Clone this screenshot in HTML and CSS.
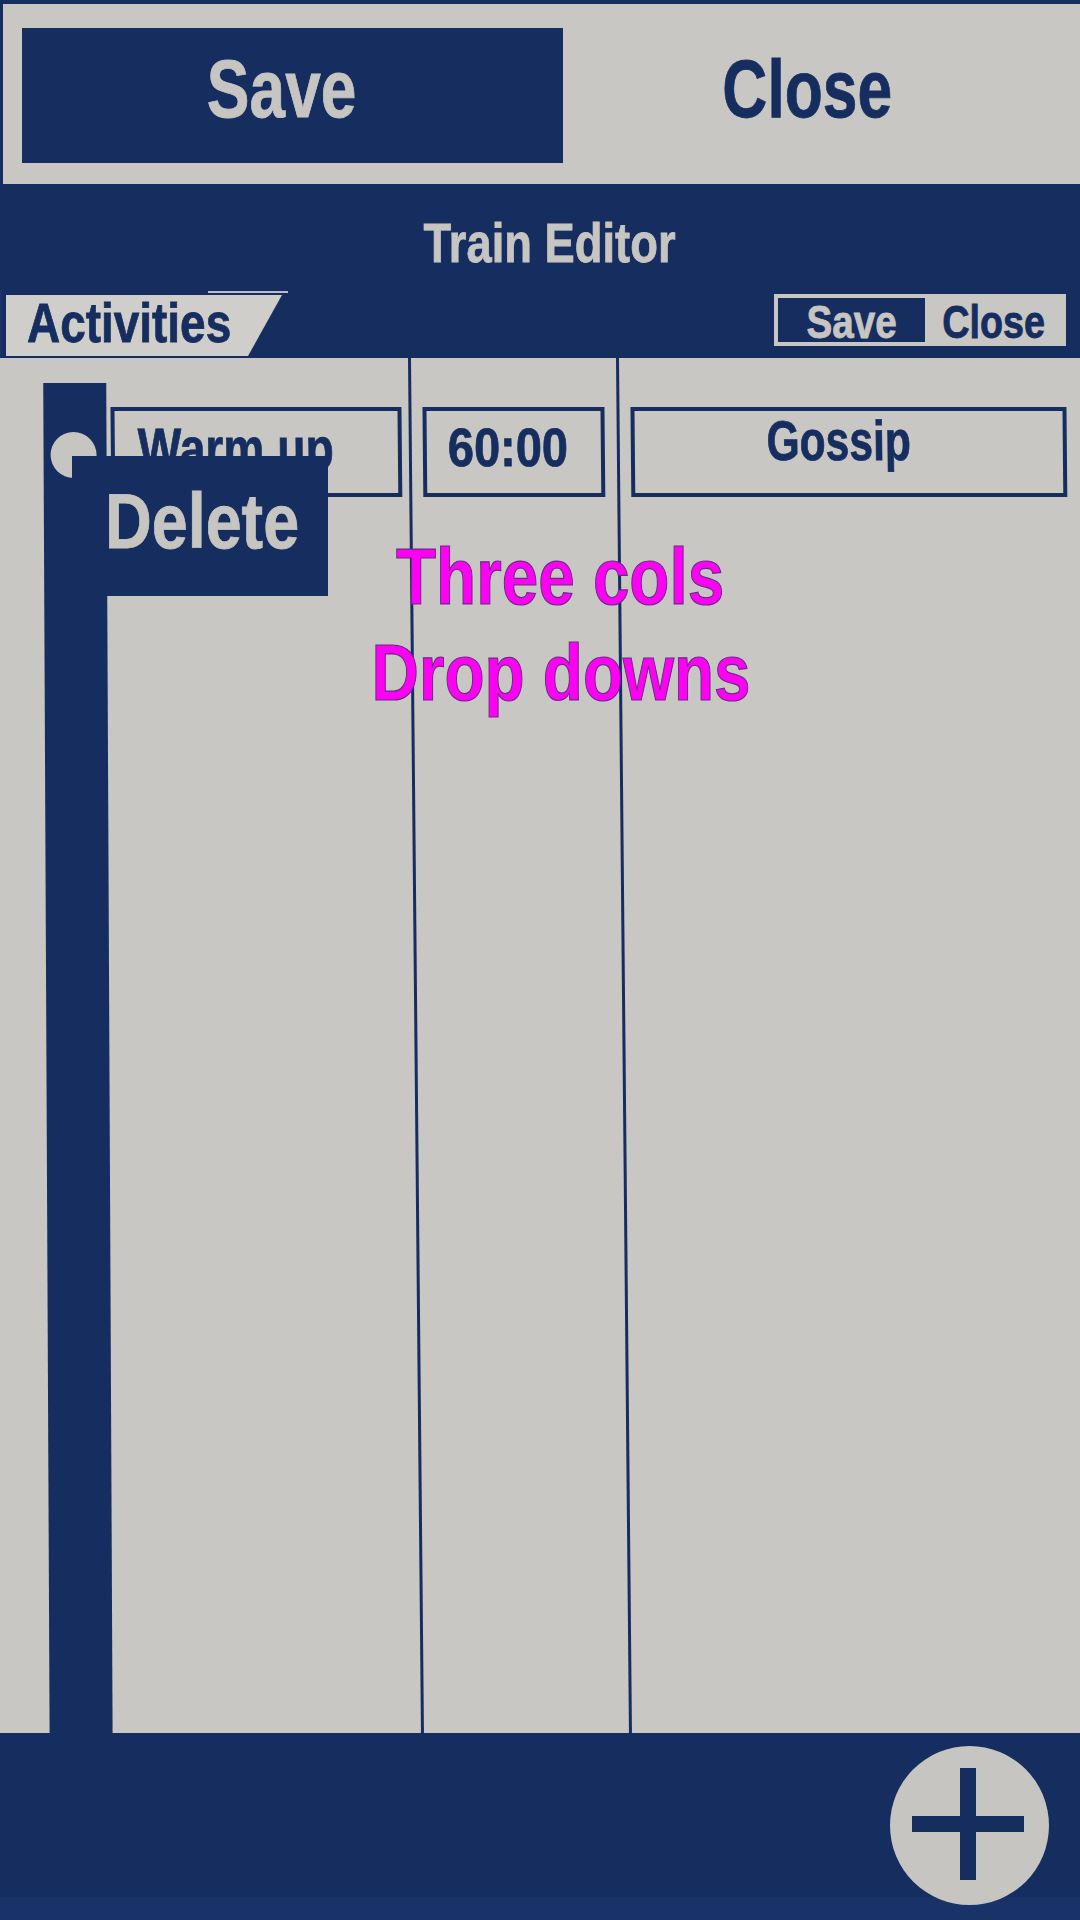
FILE: index.html
```html
<!DOCTYPE html>
<html lang="en">
<head>
<meta charset="utf-8">
<title>Train Editor</title>
<link rel="stylesheet" href="styles.css">
</head>
<body>
<div class="screen">
  <div class="topbar">
    <div class="btn-save"><span class="t">Save</span></div>
    <div class="btn-close"><span class="t">Close</span></div>
  </div>
  <div class="header">
    <div class="title"><span class="t">Train Editor</span></div>
    <div class="tabrow">
      <div class="tab-wrap"><div class="tab"><span class="t">Activities</span></div></div>
      <div class="mini"><span class="mini-save"><span class="t">Save</span></span><span class="mini-close"><span class="t">Close</span></span></div>
    </div>
  </div>
  <div class="content">
    <div class="cols">
      <div class="col col1">
        <div class="handle"><span class="knob"></span></div>
        <div class="field field-name"><span class="t">Warm up</span></div>
      </div>
      <div class="col col2"><div class="field field-time"><span class="t">60:00</span></div></div>
      <div class="col col3"><div class="field field-type"><span class="t">Gossip</span></div></div>
    </div>
    <div class="delete"><span class="t">Delete</span></div>
    <div class="note"><span class="t">Three cols</span><br><span class="t">Drop downs</span></div>
  </div>
  <div class="bottombar">
    <div class="fab">
      <svg width="159" height="159" viewBox="0 0 159 159"><rect x="70" y="22" width="16" height="112" fill="#162e5f"/><rect x="22" y="70" width="112" height="16" fill="#162e5f"/></svg>
    </div>
  </div>
</div>
</body>
</html>
```
FILE: styles.css
```css
html, body {
  margin: 0;
  padding: 0;
  background: #c8c7c3;
}
body {
  font-family: "Liberation Sans", Arial, sans-serif;
  font-weight: bold;
}
.t {
  display: inline-block;
  white-space: nowrap;
  transform-origin: center top;
  -webkit-text-stroke: 0.8px currentColor;
}
.screen {
  width: 1080px;
  height: 1920px;
  display: flex;
  flex-direction: column;
  overflow: hidden;
}
.topbar {
  height: 184px;
  box-sizing: border-box;
  border-top: 4px solid #162e5f;
  border-left: 3px solid #162e5f;
  background: #c8c7c3;
  display: flex;
  align-items: flex-start;
  padding: 24px 0 0 19px;
}
.btn-save {
  width: 541px;
  height: 135px;
  box-sizing: border-box;
  background: #162e5f;
  color: #c6c5c1;
  font-size: 81px;
  line-height: 1;
  text-align: center;
  padding: 21px 22px 0 0;
}
.btn-save .t { transform: scaleX(0.79); }
.btn-close {
  flex: 1;
  color: #162e5f;
  font-size: 81px;
  line-height: 1;
  text-align: center;
  padding: 21px 28px 0 0;
}
.btn-close .t { transform: scaleX(0.77); }
.header {
  height: 174px;
  background: #162e5f;
  display: flex;
  flex-direction: column;
}
.title {
  height: 106px;
  box-sizing: border-box;
  padding: 31px 0 0 20px;
  font-size: 56px;
  line-height: 1;
  text-align: center;
  color: #c6c5c1;
}
.title .t { transform: scaleX(0.81); }
.tabrow {
  height: 68px;
  display: flex;
  justify-content: space-between;
  align-items: flex-start;
}
.tab-wrap {
  position: relative;
  padding: 5px 0 0 4px;
  border-left: 2px solid #1b336a;
}
.tab-wrap::before {
  content: "";
  position: absolute;
  top: 1px;
  left: 206px;
  width: 80px;
  height: 2px;
  background: #b9bdc9;
}
.tab {
  width: 276px;
  height: 61px;
  box-sizing: border-box;
  background: #cfceca;
  clip-path: polygon(0 0, 100% 0, calc(100% - 34px) 100%, 0 100%);
  color: #162e5f;
  font-size: 56px;
  line-height: 56px;
  padding-left: 21px;
}
.tab .t { transform: scaleX(0.82); transform-origin: left top; }
.mini {
  margin: 4px 14px 0 0;
  height: 52px;
  box-sizing: border-box;
  padding: 4px;
  background: #c8c7c3;
  display: flex;
}
.mini-save, .mini-close {
  height: 44px;
  font-size: 46px;
  line-height: 48px;
  text-align: center;
  overflow: visible;
}
.mini-save {
  width: 147px;
  background: #162e5f;
  color: #c6c5c1;
}
.mini-save .t { transform: scaleX(0.84); }
.mini-close {
  width: 137px;
  color: #162e5f;
}
.mini-close .t { transform: scaleX(0.82); }
.content {
  flex: 1;
  position: relative;
  background: #c8c7c3;
  overflow: hidden;
}
.cols {
  display: grid;
  grid-template-columns: 411px 208px 1fr;
  height: 100%;
  transform: skewX(0.54deg);
  transform-origin: top left;
}
.col {
  display: flex;
  align-items: flex-start;
  box-sizing: border-box;
}
.col1, .col2 {
  border-right: 3px solid #162e5f;
}
.handle {
  position: relative;
  margin: 25px 0 0 43px;
  width: 63px;
  align-self: stretch;
  background: #162e5f;
  transform: skewX(-0.27deg);
  transform-origin: top left;
}
.knob {
  position: absolute;
  left: 7px;
  top: 49px;
  width: 46px;
  height: 46px;
  border-radius: 50%;
  background: #c6c5c1;
}
.field {
  height: 90px;
  box-sizing: border-box;
  border: 4px solid #162e5f;
  color: #162e5f;
  line-height: 1;
  margin-top: 49px;
}
.field-name {
  margin-left: 4px;
  width: 291px;
  font-size: 57px;
  padding: 9px 0 0 23px;
}
.field-name .t { transform: scaleX(0.81); transform-origin: left top; }
.field-time {
  margin-left: 11px;
  width: 182px;
  font-size: 54px;
  padding: 9px 0 0 21px;
}
.field-time .t { transform: scaleX(0.87); transform-origin: left top; }
.field-type {
  margin-left: 11px;
  width: 436px;
  font-size: 56px;
  padding: 2px 20px 0 0;
  text-align: center;
}
.field-type .t { transform: scaleX(0.76); }
.delete {
  position: absolute;
  left: 72px;
  top: 98px;
  width: 256px;
  height: 140px;
  box-sizing: border-box;
  background: #162e5f;
  color: #c6c5c1;
  font-size: 77px;
  line-height: 1;
  padding: 27px 0 0 33px;
}
.delete .t { transform: scaleX(0.84); transform-origin: left top; }
.note {
  position: absolute;
  left: 330px;
  top: 171px;
  width: 460px;
  text-align: center;
  font-size: 80px;
  line-height: 96px;
  color: #ff00f2;
}
.note .t {
  transform: scaleX(0.82);
  -webkit-text-stroke: 1.2px #6a2a86;
}
.bottombar {
  height: 187px;
  box-sizing: border-box;
  background: linear-gradient(#162e5f 0 164px, #193268 164px);
  display: flex;
  justify-content: flex-end;
  align-items: flex-start;
  padding: 13px 31px 0 0;
}
.fab {
  width: 159px;
  height: 159px;
  border-radius: 50%;
  background: #c6c5c1;
}
.fab svg {
  display: block;
}
```
